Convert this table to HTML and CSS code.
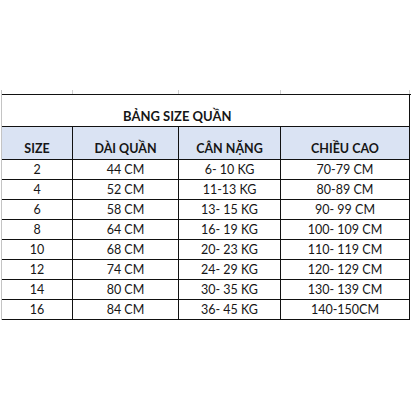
FILE: index.html
```html
<!DOCTYPE html>
<html lang="vi">
<head>
<meta charset="utf-8">
<title>Bảng size quần</title>
<link rel="stylesheet" href="styles.css">
</head>
<body>
<div class="sheet">
  <div class="stubs">
    <div class="stub"></div><div class="stub"></div><div class="stub"></div><div class="stub"></div>
  </div>
  <div class="grid">
    <div class="title">BẢNG SIZE QUẦN</div>
    <div class="cell head">SIZE</div>
    <div class="cell head">DÀI QUẦN</div>
    <div class="cell head">CÂN NẶNG</div>
    <div class="cell head">CHIỀU CAO</div>

    <div class="cell">2</div><div class="cell">44 CM</div><div class="cell">6- 10 KG</div><div class="cell">70-79 CM</div>
    <div class="cell">4</div><div class="cell">52 CM</div><div class="cell">11-13 KG</div><div class="cell">80-89 CM</div>
    <div class="cell">6</div><div class="cell">58 CM</div><div class="cell">13- 15 KG</div><div class="cell">90- 99 CM</div>
    <div class="cell">8</div><div class="cell">64 CM</div><div class="cell">16- 19 KG</div><div class="cell">100- 109 CM</div>
    <div class="cell">10</div><div class="cell">68 CM</div><div class="cell">20- 23 KG</div><div class="cell">110- 119 CM</div>
    <div class="cell">12</div><div class="cell">74 CM</div><div class="cell">24- 29 KG</div><div class="cell">120- 129 CM</div>
    <div class="cell">14</div><div class="cell">80 CM</div><div class="cell">30- 35 KG</div><div class="cell">130- 139 CM</div>
    <div class="cell">16</div><div class="cell">84 CM</div><div class="cell">36- 45 KG</div><div class="cell">140-150CM</div>
  </div>
</div>
</body>
</html>
```

FILE: styles.css
```css
* { box-sizing: border-box; }
html, body { margin: 0; padding: 0; background: #fff; }
body {
  padding: 90px 0 0 1px;
  font-family: Lato, "Open Sans", sans-serif;
  color: #161616;
}
.sheet {
  width: 410px;
  border-left: 1px solid #c4c4c4;
}
.stubs, .grid {
  display: grid;
  grid-template-columns: 71px 106px 102px 129px;
}
.stubs { height: 4px; }
.stub { border-right: 1px solid #cfcfcf; }
.grid {
  border-top: 1px solid #111;
  grid-template-rows: 32px 33px repeat(8, 20px);
}
.title {
  grid-column: 1 / 5;
  border-right: 1px solid #111;
  border-bottom: 1px solid #111;
  font-weight: 700;
  font-size: 13px;
  display: flex;
  align-items: flex-end;
  padding: 0 0 3px 121px;
  line-height: 1;
}
.cell {
  border-right: 1px solid #111;
  border-bottom: 1px solid #111;
  display: flex;
  align-items: flex-end;
  justify-content: center;
  font-size: 12.5px;
  line-height: 1;
  padding-bottom: 3px;
  white-space: nowrap;
}
.head {
  background: #dae3f3;
  font-weight: 700;
  padding-bottom: 4px;
}
```
